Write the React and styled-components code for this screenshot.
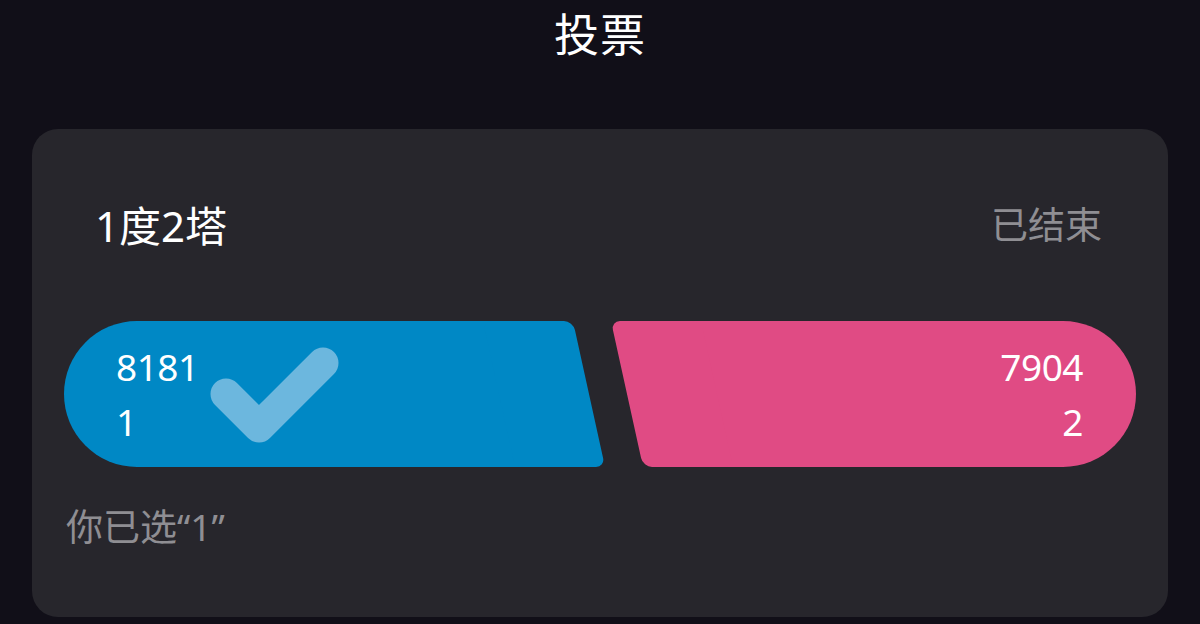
import React from 'react';
import styled, { createGlobalStyle } from 'styled-components';

const GlobalStyle = createGlobalStyle`
  html, body {
    margin: 0;
    padding: 0;
    background: #110f18;
  }
  body {
    font-family: "Noto Sans", "Noto Sans CJK SC", sans-serif;
  }
`;

const Page = styled.div`
  width: 1200px;
  height: 624px;
  overflow: hidden;
  display: flex;
  flex-direction: column;
  align-items: center;
`;

const Title = styled.h1`
  margin: 0;
  height: 70px;
  line-height: 70px;
  font-size: 45px;
  font-weight: 400;
  color: #ffffff;
  letter-spacing: 1px;
`;

const Card = styled.section`
  box-sizing: border-box;
  margin-top: 59px;
  width: 1136px;
  height: 488px;
  padding: 0 32px;
  background: #27262c;
  border-radius: 26px;
  display: flex;
  flex-direction: column;
`;

const Header = styled.div`
  display: flex;
  justify-content: space-between;
  align-items: center;
  height: 72px;
  margin-top: 58px;
  padding: 0 34px 0 31px;
`;

const Topic = styled.h2`
  margin: 0;
  font-size: 42px;
  font-weight: 400;
  color: #ffffff;
`;

const Status = styled.span`
  font-size: 37px;
  color: #8f8e93;
`;

const Bars = styled.div`
  display: flex;
  gap: 38px;
  height: 146px;
  margin-top: 62px;
`;

const SLANT = 12.4;

const Bar = styled.div`
  position: relative;
  flex: ${({ $votes }) => $votes} 1 0;
  display: flex;
  flex-direction: column;
  justify-content: center;
  align-items: ${({ $side }) => ($side === 'left' ? 'flex-start' : 'flex-end')};
  padding: ${({ $side }) => ($side === 'left' ? '0 0 0 52px' : '0 53px 0 0')};
  color: #ffffff;

  /* rounded cap on the outer end */
  &::before {
    content: '';
    position: absolute;
    top: 0;
    bottom: 0;
    ${({ $side }) => ($side === 'left' ? 'left: 0; right: 40px;' : 'right: 0; left: 40px;')}
    background: ${({ $color }) => $color};
    border-radius: ${({ $side }) => ($side === 'left' ? '73px 0 0 73px' : '0 73px 73px 0')};
  }

  /* slanted edge facing the other option */
  &::after {
    content: '';
    position: absolute;
    top: 0;
    bottom: 0;
    width: 90px;
    ${({ $side }) => ($side === 'left' ? 'right: 0;' : 'left: 0;')}
    background: ${({ $color }) => $color};
    border-radius: 9px;
    transform: skewX(${SLANT}deg);
  }
`;

const Count = styled.span`
  position: relative;
  z-index: 1;
  font-size: 37px;
  line-height: 55px;
  letter-spacing: -0.5px;
`;

const Check = styled.svg`
  position: absolute;
  z-index: 1;
  left: 140px;
  top: 6px;
  width: 150px;
  height: 130px;
`;

const Choice = styled.p`
  margin: 30px 0 0 2px;
  height: 60px;
  line-height: 60px;
  font-size: 37px;
  color: #8f8e93;
`;

const options = [
  { label: '1', votes: 8181, color: '#0088c5', side: 'left', chosen: true },
  { label: '2', votes: 7904, color: '#e04b84', side: 'right', chosen: false },
];

const CheckMark = () => (
  <Check viewBox="0 0 150 130">
    <path
      d="M22 67 L55 100 L119 36"
      fill="none"
      stroke="#6cb7de"
      strokeWidth="31"
      strokeLinecap="round"
      strokeLinejoin="round"
    />
  </Check>
);

const App = () => (
  <>
    <GlobalStyle />
    <Page>
      <Title>投票</Title>
      <Card>
        <Header>
          <Topic>1度2塔</Topic>
          <Status>已结束</Status>
        </Header>
        <Bars>
          {options.map(o => (
            <Bar key={o.label} $votes={o.votes} $color={o.color} $side={o.side}>
              {o.chosen && <CheckMark />}
              <Count>{o.votes}</Count>
              <Count>{o.label}</Count>
            </Bar>
          ))}
        </Bars>
        <Choice>你已选“1”</Choice>
      </Card>
    </Page>
  </>
);

export default App;
